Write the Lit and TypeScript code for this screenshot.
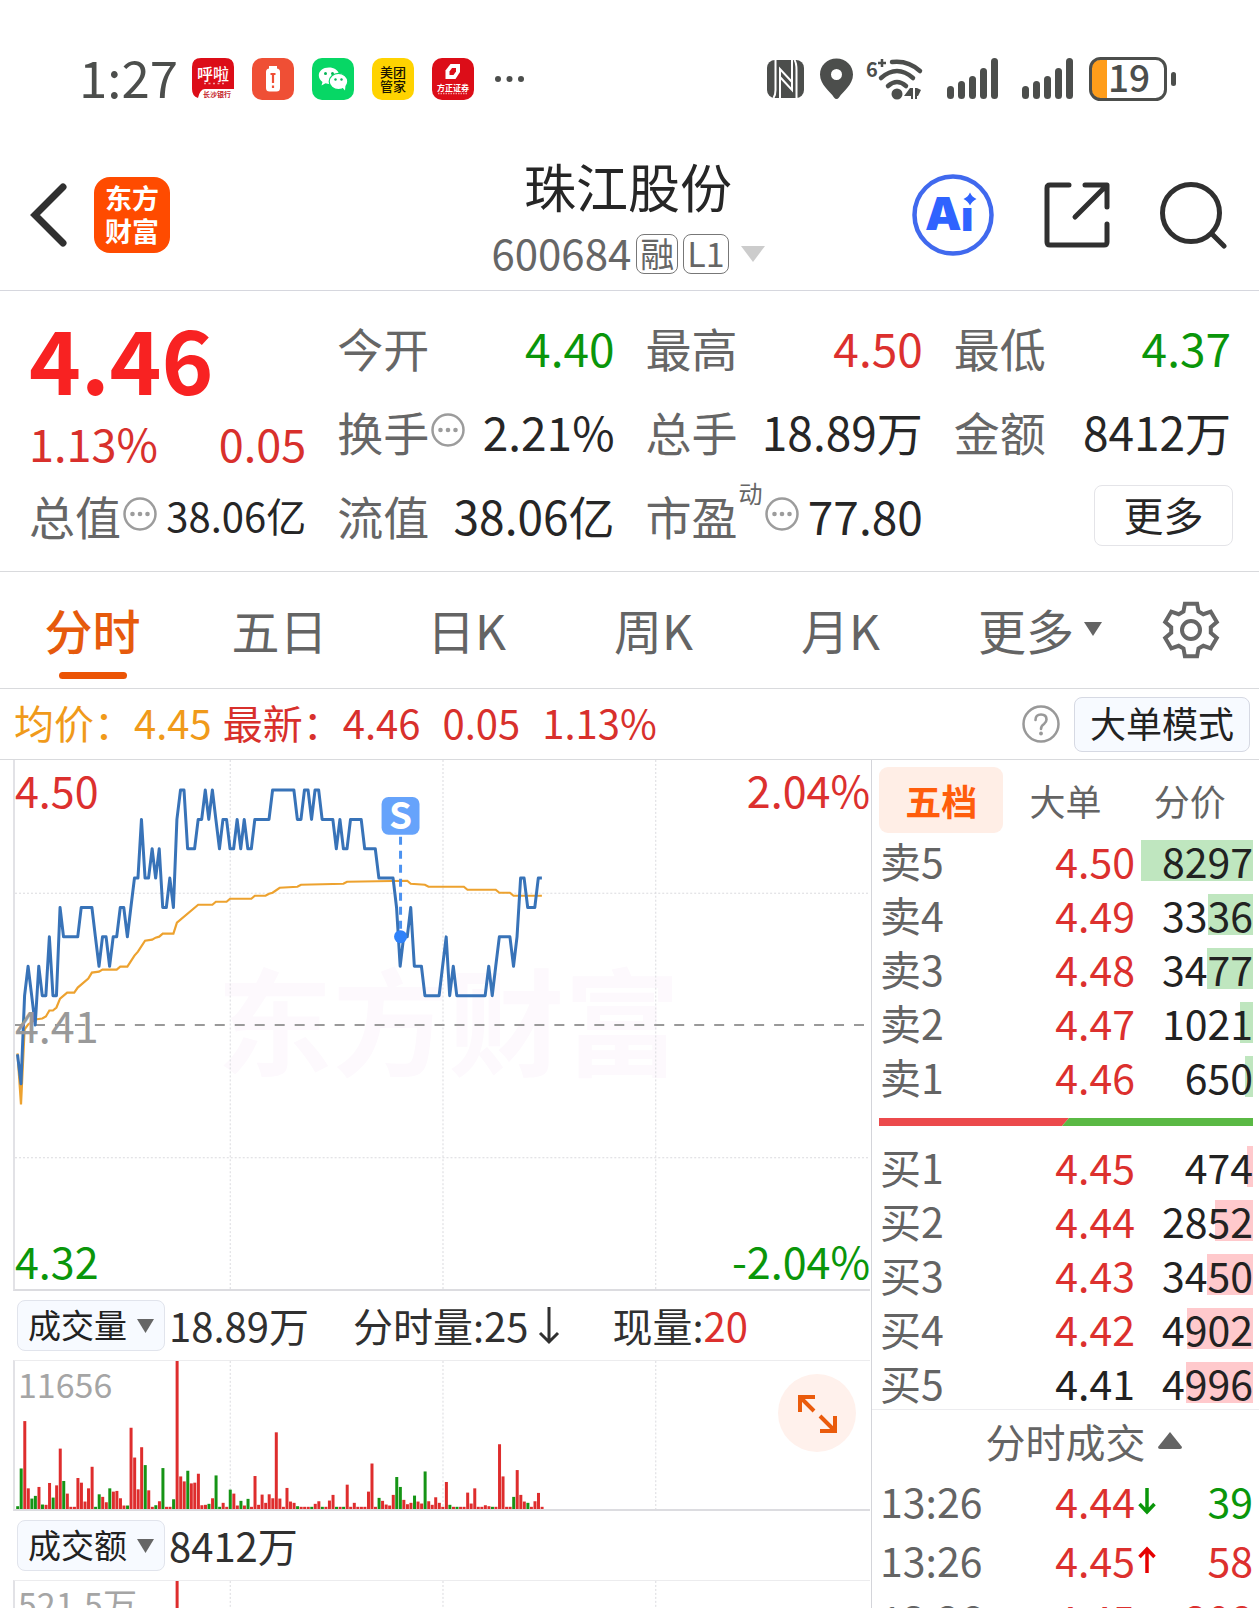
import { LitElement, html, svg, css } from "lit";
import { customElement, state } from "lit/decorators.js";
import { classMap } from "lit/directives/class-map.js";

const BASE_PRICE = 441;
const MINUTE = 3.547;

/* Price path as [cents, number of minutes it held] */
const PRICE_RUNS: [number, number][] = [
  [440, 1], [439, 1], [442, 1], [443, 1], [442, 1], [441, 1], [443, 1], [442, 2], [444, 1], [442, 2],
  [445, 1], [444, 5], [445, 4], [444, 1], [443, 1], [444, 2], [443, 1], [444, 2], [445, 2], [444, 1],
  [445, 1], [446, 2], [448, 1], [446, 2], [447, 1], [446, 1], [447, 1], [445, 2], [446, 1], [445, 1],
  [448, 1], [449, 2], [447, 3], [448, 2], [449, 1], [448, 1], [449, 1], [448, 1], [447, 1], [448, 2],
  [447, 2], [448, 1], [447, 1], [448, 1], [447, 2], [448, 5], [449, 7], [448, 2], [449, 2], [448, 1],
  [449, 2], [448, 4], [447, 1], [448, 1], [447, 2], [448, 4], [447, 4], [446, 5], [445, 1], [443, 1],
  [444, 2], [445, 1], [443, 3], [442, 5], [443, 1], [444, 1], [442, 1], [443, 1], [442, 9], [443, 1],
  [442, 1], [443, 1], [444, 4], [443, 1], [444, 1], [446, 2], [445, 3], [446, 2],
];

/* Average price curve as [minute, y] */
const AVERAGE: [number, number][] = [
  [0, 294], [1, 345], [2, 270], [3, 265], [5, 260], [7, 259], [8, 257], [9, 251], [10, 251], [11, 248],
  [12, 239], [14, 233], [16, 233], [17, 228], [20, 219], [21, 213], [23, 212], [24, 210], [28, 210],
  [29, 207], [31, 207], [33, 196], [34, 192], [36, 181], [38, 180], [39, 178], [40, 177], [41, 174],
  [44, 174], [45, 163], [51, 145], [55, 145], [56, 142], [59, 142], [60, 139], [66, 139], [67, 136],
  [70, 136], [71, 134], [72, 133], [74, 128], [79, 127], [80, 125], [92, 124], [93, 122], [110, 121],
  [111, 124], [115, 125], [116, 127], [126, 127], [127, 130], [135, 130], [136, 133], [139, 133],
  [140, 136], [148, 136],
];

/* Volume per minute; a negative value is a falling minute */
const VOLUME: number[] = [
  -10, -124, 267, 64, -33, -41, 68, -15, 14, 80, -36, 73, 184, -86, 48, 8, 8, 95, 81, 24, 64, 129, -8, -46,
  38, 22, -64, 54, 56, 34, 12, -12, 247, 157, 61, 188, -134, 58, 8, -13, 25, -125, 8, 8, -31, 449, 100, 85,
  -117, 79, 81, 108, 13, 14, -17, 34, -103, -8, 20, 8, -60, 48, 12, -26, 12, -32, 8, 101, 14, 45, 20, 46,
  34, 233, 33, 8, 65, 24, 20, -10, 8, 8, 8, -8, 17, 25, -8, 8, 27, 44, -8, 8, -8, 75, 8, 20, 8, 8, 8, 54,
  139, 8, -35, 26, 15, 12, 44, -98, -68, 29, 16, 20, -42, 24, 18, -115, 25, 14, 37, 20, 8, 83, -14, 8, -8,
  8, 8, 51, 18, 64, 8, 8, 13, 10, -8, 8, 197, 100, 8, 8, -38, 119, 44, 24, -20, 8, 25, 50, 8,
];

const SELL = [
  ["卖5", "4.50", 8297], ["卖4", "4.49", 3336], ["卖3", "4.48", 3477], ["卖2", "4.47", 1021], ["卖1", "4.46", 650],
] as const;
const BUY = [
  ["买1", "4.45", 474], ["买2", "4.44", 2852], ["买3", "4.43", 3450], ["买4", "4.42", 4902], ["买5", "4.41", 4996],
] as const;
const MAX_QTY = 8297;

const TRADES = [
  { time: "13:26", price: "4.44", dir: "down", qty: "39" },
  { time: "13:26", price: "4.45", dir: "up", qty: "58" },
  { time: "13:26", price: "4.45", dir: "", qty: "208" },
];

const minuteX = (m: number) => 2.5 + m * MINUTE;

function pricePoints(): string {
  const out: string[] = [];
  let m = 0;
  for (const [cents, n] of PRICE_RUNS) {
    const y = 265.5 - (cents - BASE_PRICE) * 29.43;
    out.push(`${minuteX(m).toFixed(1)},${y.toFixed(1)}`);
    if (n > 1) out.push(`${minuteX(m + n - 1).toFixed(1)},${y.toFixed(1)}`);
    m += n;
  }
  return out.join(" ");
}

function gearPath(): string {
  const pts: string[] = [];
  for (let k = 0; k < 6; k++) {
    for (const [r, d] of [[20, -22], [27, -13], [27, 13], [20, 22]]) {
      const a = ((k * 60 - 90 + d) * Math.PI) / 180;
      pts.push(`${(30 + r * Math.cos(a)).toFixed(1)} ${(30 + r * Math.sin(a)).toFixed(1)}`);
    }
  }
  return `M${pts.join("L")}Z`;
}

const moreDots = html`<svg class="dots" width="34" height="34" viewBox="0 0 34 34" aria-hidden="true">
  <circle cx="17" cy="17" r="15.5" fill="none" stroke="#9c9c9c" stroke-width="2.5" />
  <circle cx="9.500" cy="17" r="2.300" fill="#9c9c9c" /><circle cx="17" cy="17" r="2.300" fill="#9c9c9c" /><circle cx="24.500" cy="17" r="2.300" fill="#9c9c9c" />
</svg>`;

const signal = html`<svg width="62" height="42" viewBox="0 0 62 42" aria-label="信号">
  <g fill="#4c4e4c">
    <rect x="8" y="28" width="7" height="13" rx="3.500" /><rect x="19" y="23" width="7" height="18" rx="3.500" />
    <rect x="30" y="18" width="7" height="23" rx="3.500" /><rect x="41" y="10" width="7" height="31" rx="3.500" />
    <rect x="52" y="0" width="7" height="41" rx="3.500" />
  </g>
</svg>`;

@customElement("status-bar")
class StatusBar extends LitElement {
  static styles = css`
    :host { display: flex; align-items: center; justify-content: space-between; height: 102px; padding: 28px 83px 0 79px; color: #4c4e4c; }
    .group { display: flex; align-items: center; gap: 13px; }
    .apps { gap: 18px; }
    .time { font-size: 51px; line-height: 60px; margin-right: -4px; padding-bottom: 6px; }
    svg { display: block; flex: none; }
    text { font-family: "Noto Sans CJK SC", sans-serif; }
  `;
  render() {
    return html`
      <div class="group apps">
        <span class="time">1:27</span>
        <svg width="42" height="42" viewBox="0 0 42 42" role="img" aria-label="长沙银行">
          <path d="M9 0H33Q42 0 42 9V31H13Q8 31 6 40Q0 38 0 31V9Q0 0 9 0Z" fill="#dc0d18" />
          <text x="21" y="22" font-size="16" font-weight="500" text-anchor="middle" fill="#fff">呼啦</text>
          <path d="M12 25.500H32" stroke="#f3a3a5" stroke-width="1.500" stroke-dasharray="2 2.500" />
          <text x="25" y="39" font-size="7" font-weight="700" text-anchor="middle" fill="#c5252b">长沙银行</text>
        </svg>
        <svg width="42" height="42" viewBox="0 0 42 42" role="img" aria-label="电池提醒">
          <rect width="42" height="42" rx="10" fill="#ef4f35" />
          <path d="M17 8H25V11H17Z" fill="#fff" /><rect x="14" y="10.500" width="14" height="23" rx="3.500" fill="#fff" />
          <path d="M21 15V25M21 27.500V30M18.500 16H23.500" stroke="#ef4f35" stroke-width="2.200" />
        </svg>
        <svg width="42" height="42" viewBox="0 0 42 42" role="img" aria-label="微信">
          <rect width="42" height="42" rx="10" fill="#07d765" />
          <path d="M17 9.500C11 9.500 6.800 13 6.800 17.500C6.800 20.500 8.500 22.500 10.500 24L9.500 27.500L13.500 25.300Q17 26.300 20 25.600L27 16C26 12 22 9.500 17 9.500Z" fill="#fff" />
          <ellipse cx="26.500" cy="23.500" rx="9.300" ry="8.200" fill="#fff" stroke="#07d765" stroke-width="1.200" />
          <path d="M30 29L33 32.500L33.500 27Z" fill="#fff" />
          <g fill="#07b457"><circle cx="13.500" cy="15.500" r="1.500" /><circle cx="20.500" cy="15.500" r="1.500" /><circle cx="23.500" cy="21.500" r="1.200" /><circle cx="29.500" cy="21.500" r="1.200" /></g>
        </svg>
        <svg width="42" height="42" viewBox="0 0 42 42" role="img" aria-label="美团管家">
          <rect width="42" height="42" rx="10" fill="#ffd300" />
          <g font-size="13" font-weight="500" text-anchor="middle" fill="#191400"><text x="21" y="19">美团</text><text x="21" y="33">管家</text></g>
        </svg>
        <svg width="42" height="42" viewBox="0 0 42 42" role="img" aria-label="方正证券">
          <rect width="42" height="42" rx="10" fill="#dc0d18" />
          <path d="M18.500 6H28V14L23.500 21H13.500V12.500Z" fill="#fff" /><path d="M20 10H24V13.500L21.500 17H17.500V13.500Z" fill="#dc0d18" />
          <text x="21" y="32.500" font-size="8" font-weight="700" text-anchor="middle" fill="#fff">方正证券</text>
          <path d="M6 35.500H36" stroke="#f59ca0" stroke-width="1.500" stroke-dasharray="1.500 1" />
        </svg>
        <svg width="36" height="42" viewBox="0 0 36 42" aria-hidden="true"><g fill="#4c4e4c"><circle cx="6" cy="21" r="3" /><circle cx="17.500" cy="21" r="3" /><circle cx="29" cy="21" r="3" /></g></svg>
      </div>
      <div class="group">
        <svg width="40" height="42" viewBox="0 0 40 42" role="img" aria-label="NFC">
          <rect y="2" width="37" height="38" rx="8" fill="#4c4e4c" />
          <path d="M8.500 2V32Q8.500 37 6.500 40M13 40V11L25 24M13 19L25 32V2M27.500 2Q29.500 5 29.500 12V40" fill="none" stroke="#fff" stroke-width="2" />
        </svg>
        <svg width="33" height="42" viewBox="0 0 33 42" role="img" aria-label="定位">
          <path fill-rule="evenodd" d="M16.500 0.500C7 .500 0 7.500 0 16.500C0 27 10 33 14 39.500Q16.500 42.500 19 39.500C23 33 33 27 33 16.500C33 7.500 26 .500 16.500 .500ZM16.500 11A5.500 5.500 0 1 1 16.500 22A5.500 5.500 0 1 1 16.500 11Z" fill="#4c4e4c" />
        </svg>
        <svg width="60" height="44" viewBox="0 0 60 44" role="img" aria-label="Wi-Fi 6+">
          <g fill="none" stroke="#4c4e4c" stroke-width="4.500" stroke-linecap="round">
            <path d="M26 5Q42 3 54 14" /><path d="M15 21Q31 7 47 21" /><path d="M22 29Q31 21 40 29" />
          </g>
          <circle cx="31" cy="37" r="5.500" fill="#4c4e4c" />
          <path d="M44 31L38 39H45V42H47V31ZM49 42V31H51L55 33L52 39H51V42Z" fill="#4c4e4c" />
          <text x="0" y="20" font-size="20" font-weight="700" fill="#4c4e4c">6</text>
          <path d="M12 6H20M16 2V10" stroke="#4c4e4c" stroke-width="2.500" />
        </svg>
        ${signal}${signal}
        <svg width="87" height="44" viewBox="0 0 87 44" role="img" aria-label="电量 19%">
          <path d="M10 3H18V41H10Q3 41 3 34V10Q3 3 10 3Z" fill="#ff9d1b" />
          <rect x="1.500" y="1.500" width="75" height="41" rx="10" fill="none" stroke="#4c4e4c" stroke-width="3" />
          <rect x="82" y="15" width="5" height="14" rx="2.500" fill="#4c4e4c" />
          <text x="40" y="35" font-size="37" font-weight="500" text-anchor="middle" fill="#4c4e4c">19</text>
        </svg>
      </div>`;
  }
}

@customElement("stock-header")
class StockHeader extends LitElement {
  static styles = css`
    :host { display: grid; grid-template-columns: 1fr auto 1fr; align-items: center; height: 151px; padding: 9px 32px 0 29px; border-bottom: 1px solid #d6d7de; }
    .left, .right { display: flex; align-items: center; }
    .left { gap: 26px; }
    .right { justify-content: flex-end; gap: 50px; }
    button { border: 0; background: none; padding: 0; margin: 0; font: inherit; color: inherit; display: block; cursor: pointer; }
    svg { display: block; }
    .logo { display: flex; align-items: center; justify-content: center; width: 76px; height: 76px; border-radius: 16px; background: #ff4b00; color: #fff; font-size: 27px; line-height: 33px; font-weight: 700; text-decoration: none; }
    .logo span { width: 54px; padding-bottom: 2px; }
    .title { padding-top: 8px; }
    h1 { margin: 0; font-size: 52px; line-height: 66px; font-weight: 400; color: #262626; text-align: center; }
    .code { display: flex; align-items: center; justify-content: center; gap: 5px; height: 66px; line-height: 66px; font-size: 42px; color: #666; }
    .code .tag { height: 40px; line-height: 36px; margin-top: 4px; padding: 0 3px; border: 1px solid #777; border-radius: 8px; font-size: 34px; box-sizing: border-box; }
    .code .tri { margin-left: 7px; margin-top: 4px; }
  `;
  render() {
    return html`
      <div class="left">
        <button aria-label="返回"><svg width="39" height="64" viewBox="0 0 39 64"><path d="M34 4L6 32L34 60" fill="none" stroke="#303030" stroke-width="7" stroke-linecap="round" stroke-linejoin="miter" /></svg></button>
        <a class="logo" href="#home"><span>东方财富</span></a>
      </div>
      <div class="title">
        <h1>珠江股份</h1>
        <div class="code"><span>600684</span><span class="tag">融</span><span class="tag">L1</span>
          <svg class="tri" width="24" height="16" viewBox="0 0 24 16" aria-hidden="true"><path d="M0 0H24L12 16Z" fill="#ccc" /></svg></div>
      </div>
      <div class="right">
        <button aria-label="AI">
          <svg width="82" height="82" viewBox="0 0 82 82">
            <circle cx="41" cy="41" r="38.500" fill="none" stroke="#4069ee" stroke-width="4.500" />
            <g font-family="Inter, sans-serif" font-weight="900" fill="#2f63ff"><text x="13" y="56" font-size="46">A</text><text x="49" y="57" font-size="42">ı</text></g>
            <path d="M58 18.500Q60 23 64.500 25Q60 27 58 31.500Q56 27 51.500 25Q56 23 58 18.500Z" fill="#2f63ff" />
          </svg>
        </button>
        <button aria-label="分享">
          <svg width="66" height="66" viewBox="0 0 66 66"><path d="M25 3H6Q3 3 3 6V60Q3 63 6 63H60Q63 63 63 60V42M41 3H63V25M62 4L31 35" fill="none" stroke="#303030" stroke-width="5" stroke-linecap="round" stroke-linejoin="round" /></svg>
        </button>
        <button aria-label="搜索">
          <svg width="67" height="68" viewBox="0 0 67 68"><circle cx="31" cy="32" r="28.500" fill="none" stroke="#303030" stroke-width="5" /><path d="M52 53L64 65" stroke="#303030" stroke-width="5" stroke-linecap="round" /></svg>
        </button>
      </div>`;
  }
}

@customElement("quote-panel")
class QuotePanel extends LitElement {
  static styles = css`
    :host { display: grid; grid-template-columns: repeat(4, minmax(0, 1fr)); grid-auto-rows: 84px; column-gap: 31px; padding: 14px 28px 14px 29px; border-bottom: 1px solid #d9dadd; font-size: 46px; line-height: 84px; color: #262626; white-space: nowrap; }
    .lead { grid-row: span 2; color: #d8302c; }
    .last { display: block; font-size: 88px; line-height: 104px; font-weight: 700; color: #f82222; }
    .row { display: flex; align-items: center; justify-content: space-between; }
    .lead .row { line-height: 68px; font-size: 45px; }
    .label { display: flex; align-items: center; color: #666; }
    .dots { display: block; margin: 0 0 2px 2px; }
    .up { color: #dc302e; }
    .down { color: #0a960a; }
    .small { font-size: 40px; }
    sup { font-size: 24px; line-height: 24px; align-self: flex-start; padding-top: 8px; margin-left: 1px; }
    .act { display: flex; align-items: center; justify-content: flex-end; }
    button { width: 139px; height: 61px; border: 1px solid #e4e4e8; border-radius: 8px; background: #fff; font: inherit; font-size: 40px; line-height: 56px; padding: 0 0 4px; color: #262626; margin-right: -2px; }
  `;
  private cell(label: unknown, value: string, cls = "") {
    return html`<div class="row"><span class="label">${label}</span><span class=${cls}>${value}</span></div>`;
  }
  render() {
    return html`
      <div class="lead">
        <strong class="last">4.46</strong>
        <div class="row"><span>1.13%</span><span>0.05</span></div>
      </div>
      ${this.cell("今开", "4.40", "down")}${this.cell("最高", "4.50", "up")}${this.cell("最低", "4.37", "down")}
      ${this.cell(html`换手${moreDots}`, "2.21%")}${this.cell("总手", "18.89万")}${this.cell("金额", "8412万")}
      ${this.cell(html`总值${moreDots}`, "38.06亿", "small")}${this.cell("流值", "38.06亿")}
      ${this.cell(html`市盈<sup>动</sup>${moreDots}`, "77.80")}
      <div class="act"><button>更多</button></div>`;
  }
}

@customElement("chart-tabs")
class ChartTabs extends LitElement {
  @state() private active = 0;
  static styles = css`
    :host { display: block; }
    nav { display: grid; grid-template-columns: repeat(5, 187fr) 212fr 88fr; height: 116px; padding-right: 24px; border-bottom: 1px solid #d9dadd; }
    button { position: relative; display: flex; align-items: center; justify-content: center; gap: 10px; border: 0; background: none; font: inherit; font-size: 48px; line-height: 60px; padding: 0 2px 2px 0; color: #646464; white-space: nowrap; }
    .on { color: #e65a0c; font-weight: 500; }
    .on::after { content: ""; position: absolute; left: 50%; bottom: 9px; width: 68px; height: 7px; margin-left: -35px; border-radius: 4px; background: #eb5405; }
    .gear { padding: 0; }
    .info { display: flex; align-items: center; height: 70px; padding: 0 9px 0 14px; border-bottom: 1px solid #d9dadd; font-size: 40px; line-height: 60px; color: #d8302c; white-space: nowrap; }
    .info span { padding-bottom: 4px; }
    .avg { color: #f09a1a; margin-right: 11px; }
    .gap { margin-left: 22px; }
    .help { margin-left: auto; padding: 0 14px 0 0; }
    .mode { height: 55px; padding: 0 15px 4px; border: 1px solid #d6d9e3; border-radius: 8px; background: #f7faff; font-size: 36px; line-height: 48px; color: #222; }
  `;
  render() {
    const tabs = ["分时", "五日", "日K", "周K", "月K"];
    return html`
      <nav>
        ${tabs.map((t, i) => html`<button class=${classMap({ on: i === this.active })} @click=${() => (this.active = i)}>${t}</button>`)}
        <button>更多<svg width="18" height="14" viewBox="0 0 18 14" aria-hidden="true"><path d="M0 0H18L9 14Z" fill="#646464" /></svg></button>
        <button class="gear" aria-label="设置"><svg width="60" height="60" viewBox="0 0 60 60"><g fill="none" stroke="#666" stroke-width="4"><path d=${gearPath()} /><circle cx="30" cy="30" r="9" /></g></svg></button>
      </nav>
      <div class="info">
        <span class="avg">均价：4.45</span><span>最新：4.46</span><span class="gap">0.05</span><span class="gap">1.13%</span>
        <button class="help" aria-label="帮助"><svg width="38" height="38" viewBox="0 0 38 38"><circle cx="19" cy="19" r="17.500" fill="none" stroke="#999" stroke-width="2.500" /><path d="M13.500 15Q13.500 9.500 19 9.500Q24.500 9.500 24.500 14.500Q24.500 17 22 19Q19 21 19 24" fill="none" stroke="#999" stroke-width="2.600" stroke-linecap="round" /><circle cx="19" cy="28.500" r="1.900" fill="#999" /></svg></button>
        <button class="mode">大单模式</button>
      </div>`;
  }
}

@customElement("trend-chart")
class TrendChart extends LitElement {
  static styles = css`
    :host { display: block; min-width: 0; }
    .plot { position: relative; margin: 0 1px 0 13px; border-left: 2px solid #e2e2e6; border-bottom: 2px solid #dcdce0; box-sizing: border-box; }
    .price { height: 531px; }
    .vol { height: 151px; border-top: 1px solid #ececee; }
    .plot svg.canvas { display: block; width: 100%; height: 100%; }
    .tag { position: absolute; font-size: 43px; line-height: 52px; color: #dc302e; }
    .tl { left: 0; top: 3px; }
    .tr { right: 0; top: 3px; }
    .ml { left: 0; top: 238px; color: #999; }
    .bl { left: 0; bottom: 3px; color: #0a960a; }
    .br { right: 0; bottom: 3px; color: #0a960a; }
    .cap { left: 3px; top: 1px; font-size: 34px; line-height: 44px; color: #a5a5a5; }
    .bar { display: flex; align-items: center; height: 69px; padding-left: 17px; font-size: 40px; line-height: 60px; color: #303030; white-space: nowrap; }
    .bar span { padding-bottom: 2px; }
    .bar .first { margin-left: 4px; }
    .bar .next { margin-left: 44px; }
    .bar .now { margin-left: 52px; }
    .bar b { font-weight: 400; color: #dc302e; }
    .pick { position: relative; display: block; }
    .pick svg { position: absolute; right: 11px; top: 19px; pointer-events: none; }
    select { appearance: none; display: block; height: 51px; border: 1px solid #e1e4ec; border-radius: 8px; background: #f7faff; font: inherit; font-size: 33px; line-height: 44px; padding: 0 37px 4px 10px; color: #222; }
    .zoom { position: absolute; right: 14px; top: 13px; width: 78px; height: 78px; border: 0; border-radius: 50%; background: #fff1ec; padding: 0; }
    .zoom svg { display: block; }
    .arrow { margin-left: 10px; }
  `;
  private grid(height: number, rows: number[] = []) {
    return svg`<g stroke="#dadade" stroke-width="1" stroke-dasharray="2 2" vector-effect="non-scaling-stroke">
      ${[215.5, 428.5, 641.5].map((x) => svg`<path d="M${x} 0V${height}" />`)}
      ${rows.map((y) => svg`<path d="M0 ${y}H856" />`)}</g>`;
  }
  private picker(label: string) {
    return html`<label class="pick"><select aria-label="指标"><option ?selected=${label === "成交量"}>成交量</option><option ?selected=${label === "成交额"}>成交额</option></select>
      <svg width="17" height="14" viewBox="0 0 17 14" aria-hidden="true"><path d="M0 0H17L8.500 14Z" fill="#666" /></svg></label>`;
  }
  private bars() {
    return html`<svg class="canvas" viewBox="0 0 856 149" preserveAspectRatio="none" aria-hidden="true">
      ${this.grid(149)}
      ${VOLUME.map((v, i) => svg`<rect x=${(1.2 + i * MINUTE).toFixed(1)} y=${(149.5 - Math.abs(v) / 3).toFixed(1)} width="3" height=${(Math.abs(v) / 3).toFixed(1)} fill=${v < 0 ? "#159415" : "#de2d2d"} />`)}
    </svg>`;
  }
  render() {
    return html`
      <div class="plot price">
        <svg class="canvas" viewBox="0 0 856 530" preserveAspectRatio="none" role="img" aria-label="分时走势">
          <text x="434" y="308" text-anchor="middle" font-family="Noto Sans CJK SC, sans-serif" font-size="116" font-weight="700" fill="#fdf9fd">东方财富</text>
          ${this.grid(530, [133.5, 398.5])}
          <path d="M0 265.500H856" stroke="#999" stroke-width="2" stroke-dasharray="10 10" />
          <polyline points=${AVERAGE.map(([m, y]) => `${minuteX(m).toFixed(1)},${y}`).join(" ")} fill="none" stroke="#eda22f" stroke-width="2.200" />
          <polyline points=${pricePoints()} fill="none" stroke="#3873b8" stroke-width="3" stroke-linejoin="round" />
          <path d="M386 77V172" stroke="#4c92f0" stroke-width="3" stroke-dasharray="8 6" />
          <circle cx="386" cy="177" r="6.500" fill="#2f82fa" />
          <rect x="367" y="37" width="38" height="38" rx="7" fill="#66a3fb" />
          <text x="386" y="69" text-anchor="middle" font-family="Noto Sans CJK SC, sans-serif" font-size="37" font-weight="700" fill="#fff">S</text>
        </svg>
        <span class="tag tl">4.50</span><span class="tag tr">2.04%</span><span class="tag ml">4.41</span>
        <span class="tag bl">4.32</span><span class="tag br">-2.04%</span>
      </div>
      <div class="bar">
        ${this.picker("成交量")}<span class="first">18.89万</span><span class="next">分时量:25</span>
        <svg class="arrow" width="22" height="38" viewBox="0 0 22 38" aria-hidden="true"><path d="M11 0V35M2 26L11 35L20 26" fill="none" stroke="#303030" stroke-width="3" /></svg>
        <span class="now">现量:<b>20</b></span>
      </div>
      <div class="plot vol">
        ${this.bars()}
        <span class="tag cap">11656</span>
        <button class="zoom" aria-label="全屏"><svg width="78" height="78" viewBox="0 0 78 78"><path d="M22 38V23H37M22 23L36 37M57 42V57H42M57 57L42 42" fill="none" stroke="#ea5b0c" stroke-width="4" /></svg></button>
      </div>
      <div class="bar">${this.picker("成交额")}<span class="first">8412万</span></div>
      <div class="plot vol">${this.bars()}<span class="tag cap">521.5万</span></div>`;
  }
}

@customElement("order-book")
class OrderBook extends LitElement {
  @state() private active = 0;
  static styles = css`
    :host { display: block; border-left: 1px solid #d4d5da; color: #222; }
    .tabs { display: grid; grid-template-columns: repeat(3, 1fr); margin: 7px 7px 0; height: 66px; }
    .tabs button { border: 0; border-radius: 9px; background: none; font: inherit; font-size: 36px; line-height: 48px; padding: 0; color: #646464; }
    .tabs .on { background: #ffeee6; color: #ff5d0c; font-weight: 700; }
    table { width: 100%; border-collapse: collapse; font-size: 41px; line-height: 56px; white-space: nowrap; }
    td, th { padding: 0; height: 54px; line-height: 54px; font-weight: 400; text-align: right; }
    th { text-align: left; padding-left: 8px; color: #646464; }
    .qty { width: 118px; padding-right: 6px; }
    .cell { position: relative; display: block; z-index: 0; }
    .fill { position: absolute; right: 0; top: 7px; height: 41px; z-index: -1; background: #bfe6bf; }
    .buy .fill { background: #ffc9cc; }
    .up { color: #dc302e; }
    .down { color: #0a960a; }
    .ratio { display: block; width: calc(100% - 13px); height: 8px; margin: 15px 6px 13px 7px; }
    h2 { display: flex; align-items: center; justify-content: center; gap: 12px; height: 61px; margin: 0; padding-left: 36px; border-top: 1px solid #ececef; font-size: 40px; line-height: 60px; font-weight: 400; color: #646464; }
    .trades td, .trades th { height: 59px; line-height: 59px; }
    .trades .arrow { width: 22px; text-align: right; }
    .trades .arrow svg { display: block; margin-left: 3px; }
    .trades .qty { width: 96px; }
  `;
  private rows(list: typeof SELL | typeof BUY, cls: string) {
    return html`<table class=${cls}><tbody>${list.map(([label, price, qty]) => html`<tr>
      <th scope="row">${label}</th><td class=${price === "4.41" ? "" : "up"}>${price}</td>
      <td class="qty"><span class="cell"><span class="fill" style="width:${Math.floor((qty / MAX_QTY) * 112)}px"></span>${qty}</span></td></tr>`)}</tbody></table>`;
  }
  private arrow(dir: string) {
    if (!dir) return "";
    return dir === "up"
      ? html`<svg width="18" height="28" viewBox="0 0 18 28" aria-label="涨"><path d="M9 27V3M1.500 11L9 3L16.500 11" fill="none" stroke="#e60000" stroke-width="3.500" /></svg>`
      : html`<svg width="18" height="28" viewBox="0 0 18 28" aria-label="跌"><path d="M9 1V25M1.500 17L9 25L16.500 17" fill="none" stroke="#0a960a" stroke-width="3.500" /></svg>`;
  }
  render() {
    return html`
      <div class="tabs">${["五档", "大单", "分价"].map((t, i) => html`<button class=${classMap({ on: i === this.active })} @click=${() => (this.active = i)}>${t}</button>`)}</div>
      ${this.rows(SELL, "sell")}
      <svg class="ratio" viewBox="0 0 374 8" preserveAspectRatio="none" aria-hidden="true"><path d="M0 0H190L183 8H0Z" fill="#ec4a4c" /><path d="M190 0H374V8H183Z" fill="#5ab944" /></svg>
      ${this.rows(BUY, "buy")}
      <h2>分时成交<svg width="24" height="17" viewBox="0 0 24 17" aria-hidden="true"><path d="M12 0L24 15Q24 17 22 17H2Q0 17 0 15Z" fill="#646464" /></svg></h2>
      <table class="trades"><tbody>${TRADES.map((t) => html`<tr><th scope="row">${t.time}</th><td class="up">${t.price}</td>
        <td class="arrow">${this.arrow(t.dir)}</td><td class="qty ${t.dir === "down" ? "down" : "up"}">${t.qty}</td></tr>`)}</tbody></table>`;
  }
}

@customElement("app-root")
class AppRoot extends LitElement {
  static styles = css`
    :host { display: block; height: 100vh; overflow: hidden; background: #fff; font-family: "Noto Sans CJK SC", "Noto Sans", sans-serif; }
    .body { display: grid; grid-template-columns: minmax(0, 1fr) 388px; }
  `;
  render() {
    return html`
      <status-bar></status-bar>
      <stock-header></stock-header>
      <quote-panel></quote-panel>
      <chart-tabs></chart-tabs>
      <div class="body"><trend-chart></trend-chart><order-book></order-book></div>`;
  }
}
